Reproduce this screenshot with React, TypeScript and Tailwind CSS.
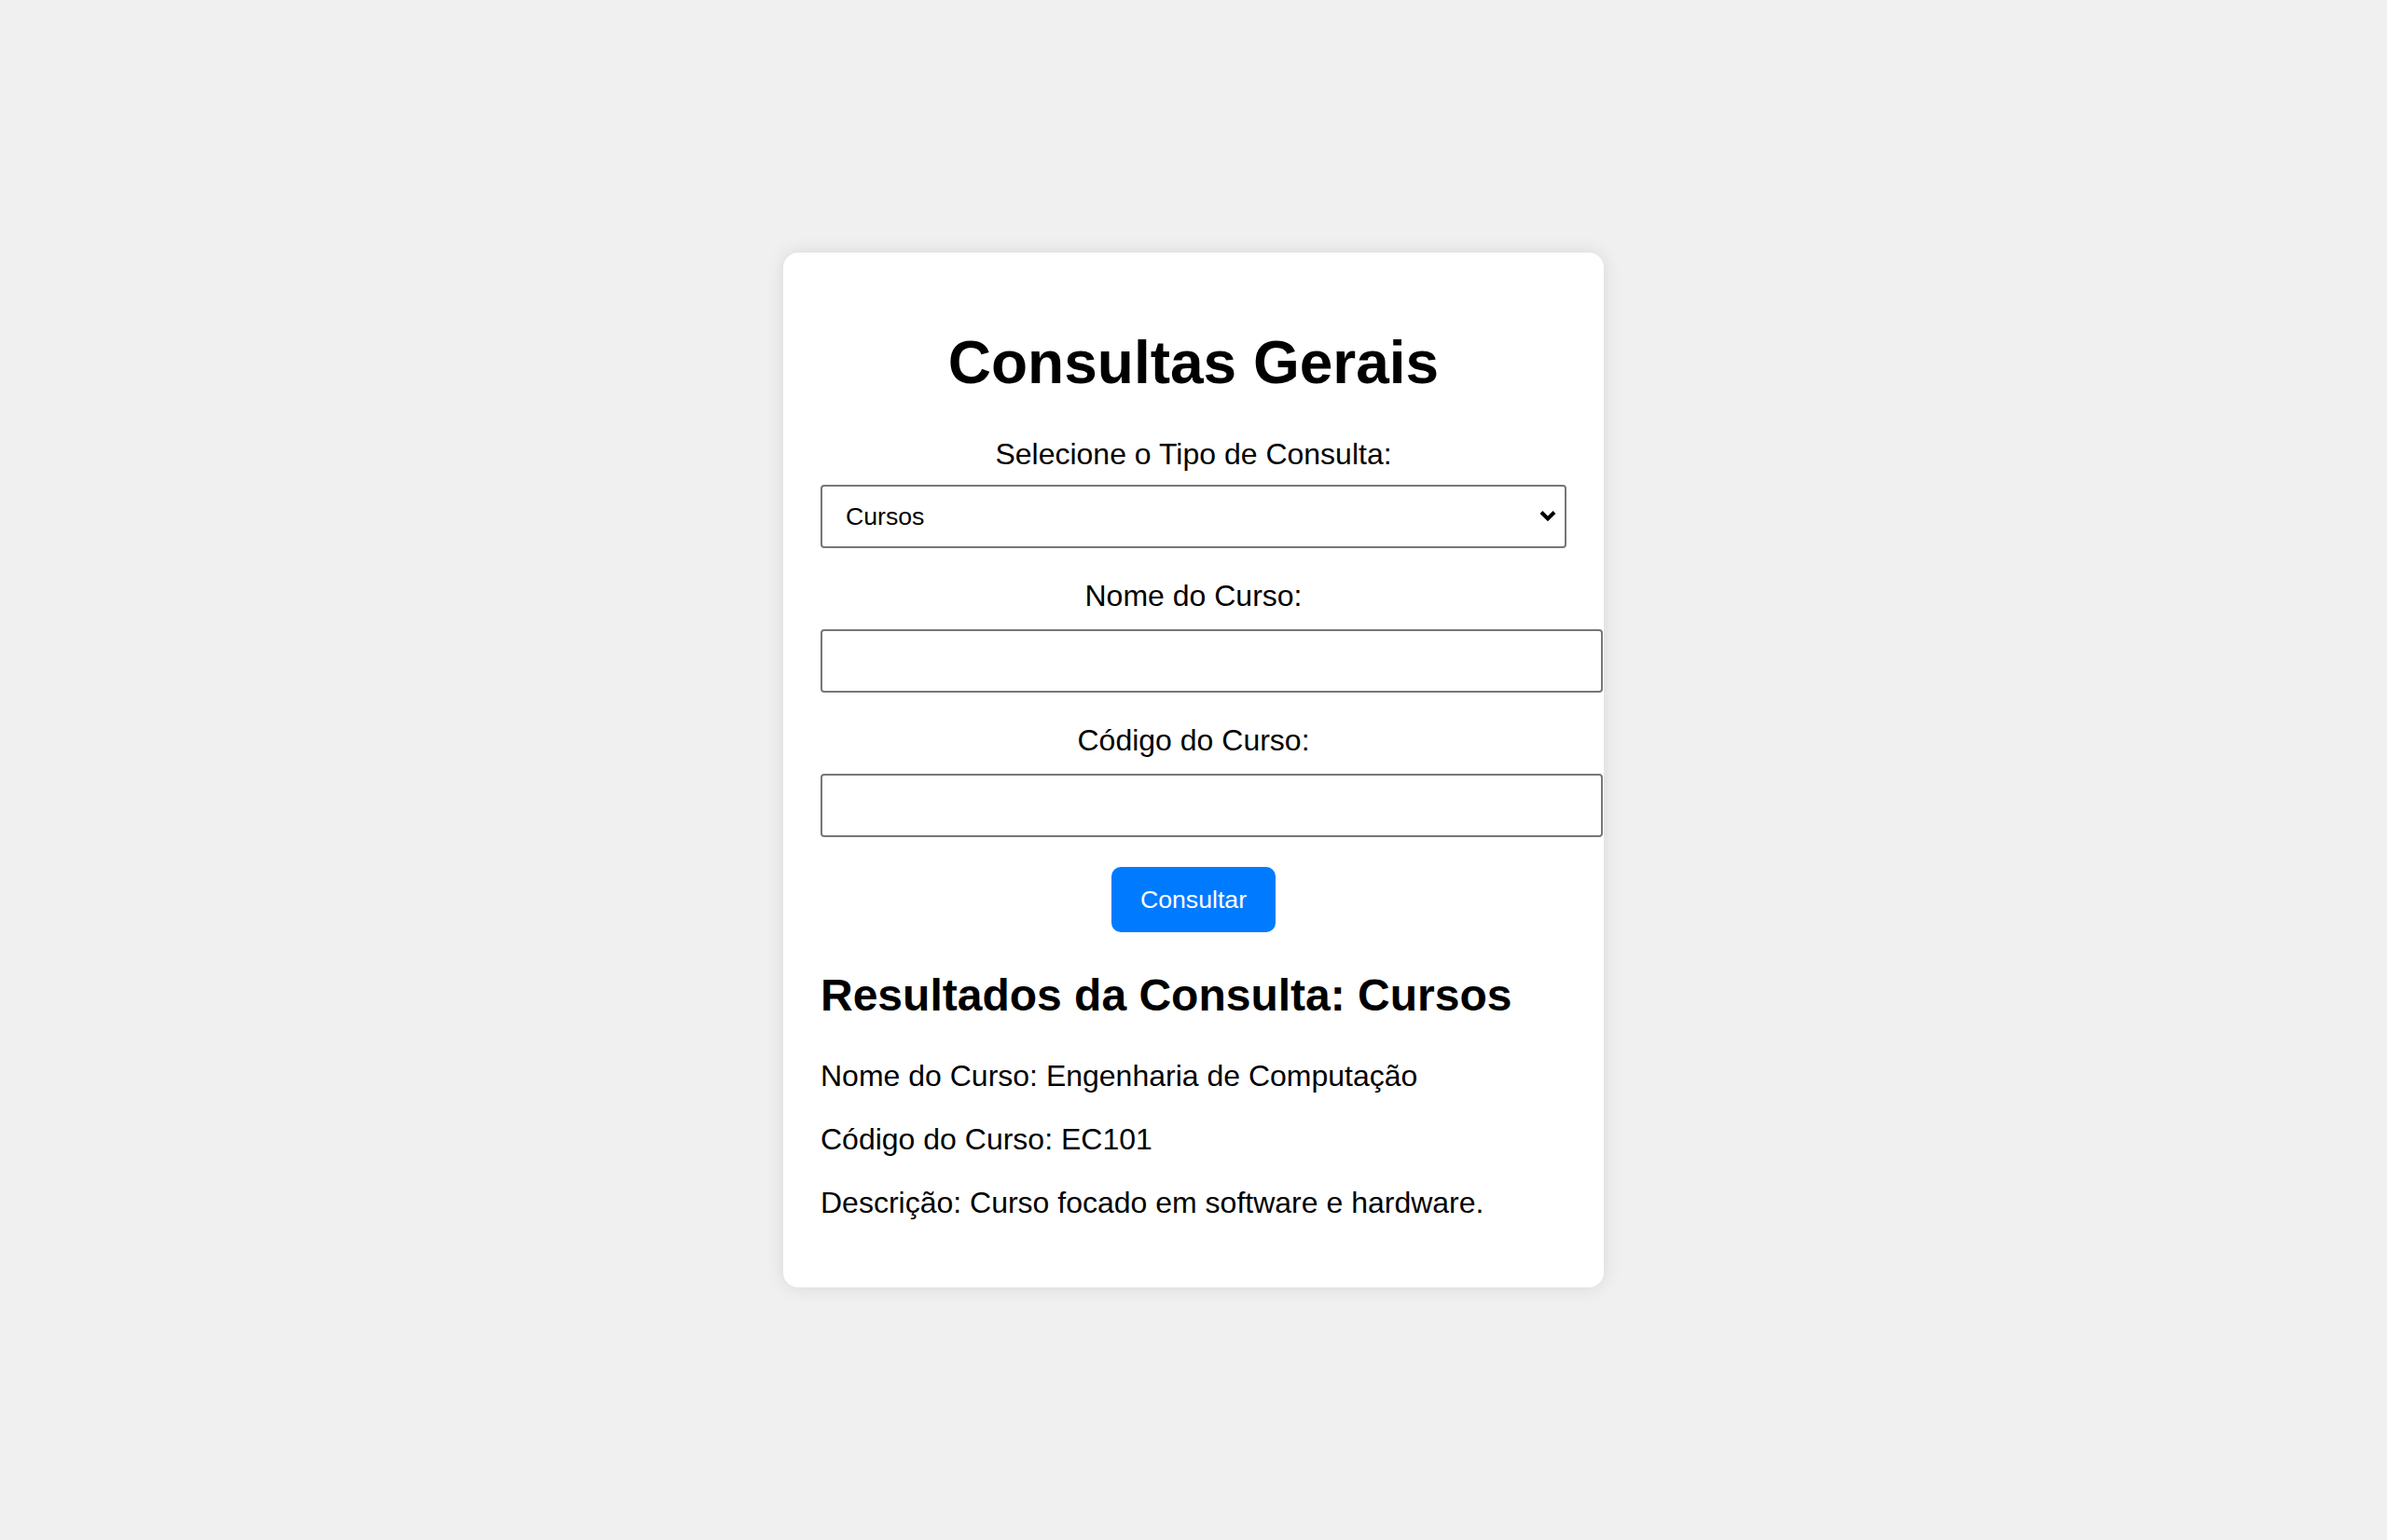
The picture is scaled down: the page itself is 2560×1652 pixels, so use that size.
import React from 'react';

export default function App() {
  return (
    <div className="min-h-screen bg-[#f0f0f0] flex items-center justify-center font-['Liberation_Sans',Arial,sans-serif] text-black">
      <div className="w-[880px] bg-white rounded-[16px] shadow-[0_0_20px_rgba(0,0,0,0.1)] p-[40px] flex flex-col">
        <h1 className="mt-[41px] mb-[43px] text-center text-[64px] leading-[74px] font-bold">
          Consultas Gerais
        </h1>
        <label className="block text-center text-[32px] leading-[37px] mb-[14px]">
          Selecione o Tipo de Consulta:
        </label>
        <div className="relative w-[800px] h-[68px]">
          <select
            defaultValue="cursos"
            className="appearance-none w-full h-full border-2 border-[#767676] rounded-[4px] bg-white pl-[25px] text-[26.67px] text-black outline-none font-['Liberation_Sans',Arial,sans-serif]"
          >
            <option value="alunos">Alunos</option>
            <option value="cursos">Cursos</option>
            <option value="professores">Professores</option>
          </select>
          <svg
            className="absolute right-[11px] top-[27px] pointer-events-none"
            width="18"
            height="13"
            viewBox="0 0 18 13"
          >
            <path d="M2 2.5 L9 9.5 L16 2.5" fill="none" stroke="#000" strokeWidth="4" />
          </svg>
        </div>
        <label className="block text-center text-[32px] leading-[37px] mt-[33px] mb-[17px]">
          Nome do Curso:
        </label>
        <input
          type="text"
          className="w-[839px] h-[68px] border-2 border-[#767676] rounded-[4px] bg-white px-[18px] text-[26.67px] outline-none"
        />
        <label className="block text-center text-[32px] leading-[37px] mt-[33px] mb-[17px]">
          Código do Curso:
        </label>
        <input
          type="text"
          className="w-[839px] h-[68px] border-2 border-[#767676] rounded-[4px] bg-white px-[18px] text-[26.67px] outline-none"
        />
        <div className="flex justify-center mt-[32px]">
          <button className="bg-[#007bff] text-white text-[26.67px] leading-[30px] px-[31px] py-[20px] rounded-[10px]">
            Consultar
          </button>
        </div>
        <h2 className="mt-[40px] text-[48px] leading-[55px] font-bold">
          Resultados da Consulta: Cursos
        </h2>
        <p className="mt-[41px] text-[32px] leading-[37px]">
          Nome do Curso: Engenharia de Computação
        </p>
        <p className="mt-[31px] text-[32px] leading-[37px]">Código do Curso: EC101</p>
        <p className="mt-[31px] mb-[32px] text-[32px] leading-[37px]">
          Descrição: Curso focado em software e hardware.
        </p>
      </div>
    </div>
  );
}
